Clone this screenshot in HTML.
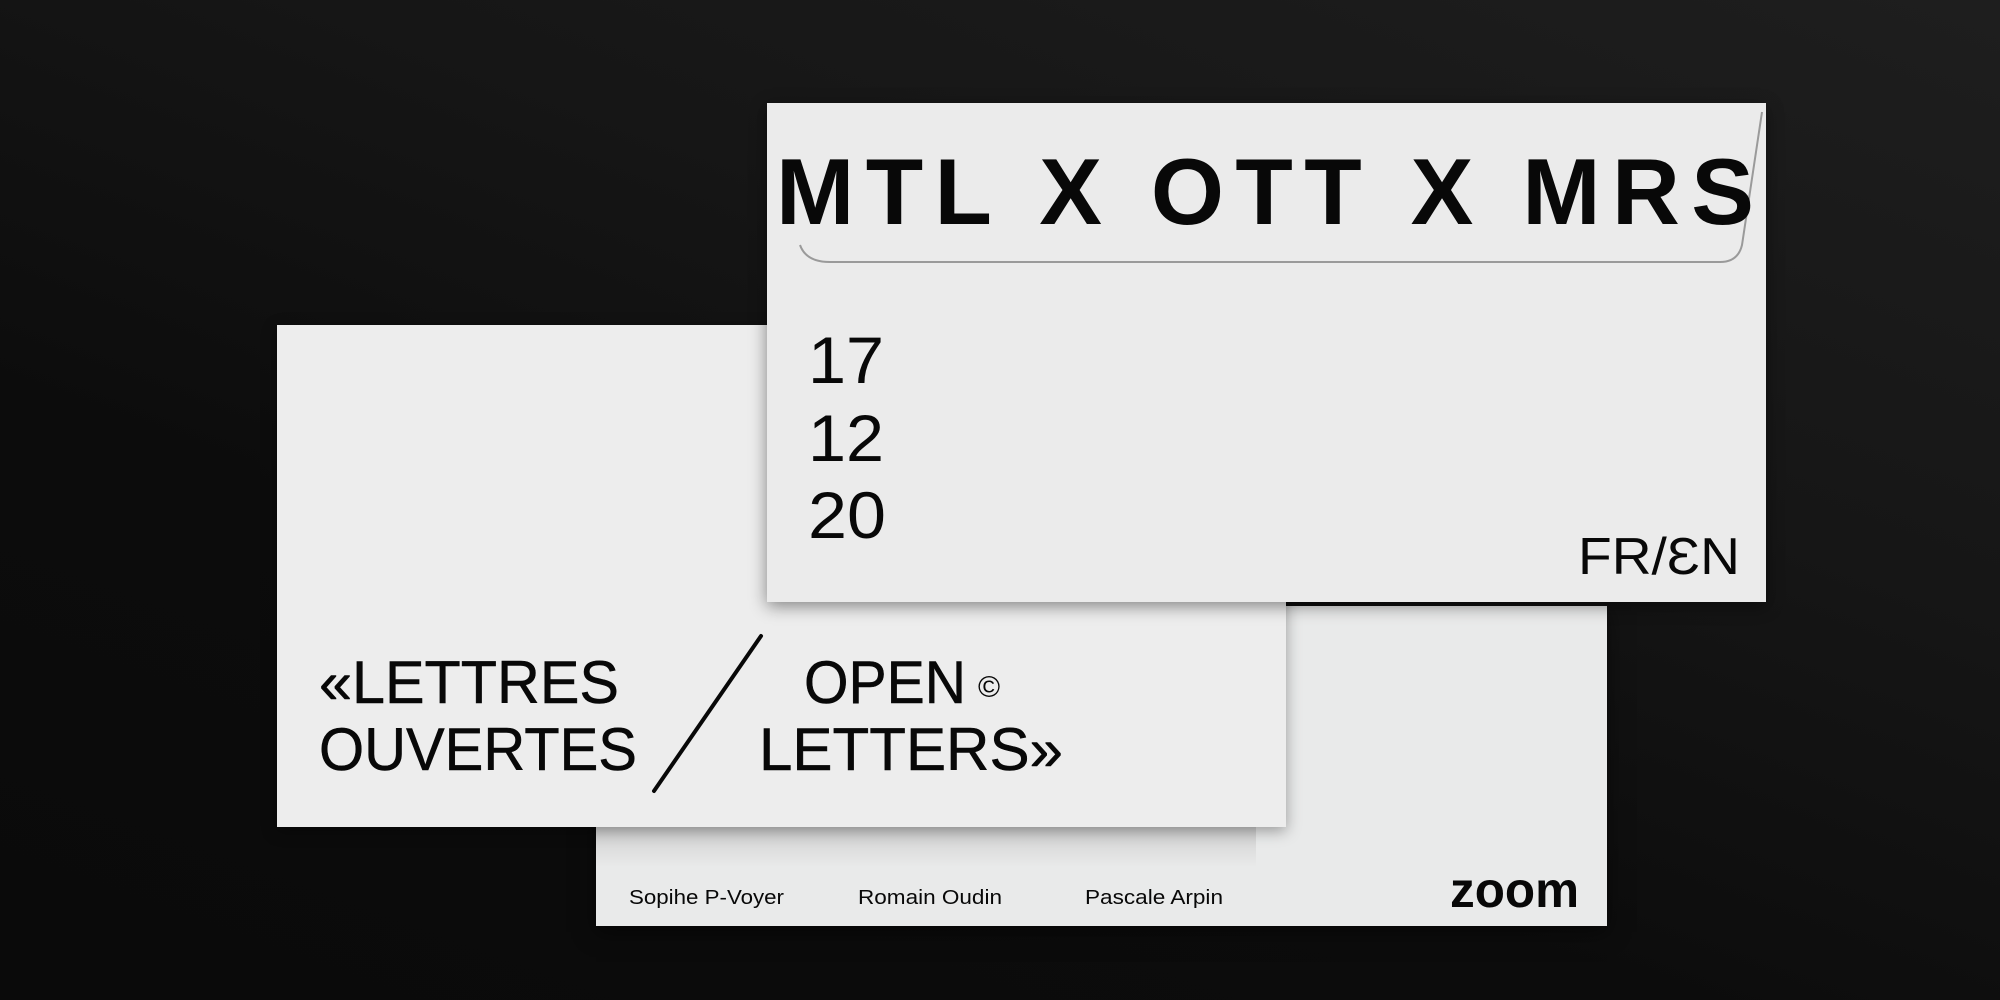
<!DOCTYPE html>
<html><head><meta charset="utf-8"><style>
html,body{margin:0;padding:0;width:2000px;height:1000px;overflow:hidden;background:#0e0e0e}
.bg{position:absolute;inset:0;background:linear-gradient(200deg,#1e1e1e 0%,#161616 35%,#0c0c0c 65%,#0a0a0a 100%)}
.p{position:absolute;background:#ececec}
svg{position:absolute;left:0;top:0}
</style></head><body>
<div class="bg"></div>
<div class="p" style="left:596px;top:606px;width:1011px;height:320px;background:#e9eaea;box-shadow:0 6px 20px rgba(0,0,0,.5)"></div>
<div class="p" style="left:596px;top:827px;width:660px;height:40px;background:linear-gradient(#cfcfcf,rgba(233,234,234,0))"></div>
<div class="p" style="left:277px;top:325px;width:1009px;height:502px;background:#ededed;box-shadow:0 4px 14px rgba(0,0,0,.35)"></div>
<div class="p" style="left:767px;top:103px;width:999px;height:499px;background:#ebebeb;box-shadow:0 4px 16px rgba(0,0,0,.45)"></div>
<svg width="2000" height="1000" viewBox="0 0 2000 1000">
  <path d="M800 245 Q806 262 830 262 L1720 262 Q1738 262 1742 245 L1762 112" fill="none" stroke="#9a9a9a" stroke-width="2"/>
  <g font-family="Liberation Sans, sans-serif" fill="#080808">
    <text x="776" y="224" font-size="94" font-weight="bold" textLength="978" lengthAdjust="spacing">MTL X OTT X MRS</text>
    <g font-size="66">
      <text x="808" y="383" textLength="76" lengthAdjust="spacingAndGlyphs">17</text>
      <text x="808" y="461" textLength="76" lengthAdjust="spacingAndGlyphs">12</text>
      <text x="808" y="538" textLength="78" lengthAdjust="spacingAndGlyphs">20</text>
    </g>
    <text x="1578" y="574" font-size="52" textLength="162" lengthAdjust="spacingAndGlyphs">FR/ƐN</text>
    <g font-size="60" stroke="#080808" stroke-width="0.5">
      <text x="319" y="703" textLength="300" lengthAdjust="spacingAndGlyphs">«LETTRES</text>
      <text x="319" y="770" textLength="318" lengthAdjust="spacingAndGlyphs">OUVERTES</text>
      <text x="804" y="703" textLength="162" lengthAdjust="spacingAndGlyphs">OPEN</text>
      <text x="759" y="770" textLength="304" lengthAdjust="spacingAndGlyphs">LETTERS»</text>
    </g>
    <text x="978" y="697" font-size="30">©</text>
    <g font-size="20">
      <text x="629" y="904" textLength="155" lengthAdjust="spacingAndGlyphs">Sopihe P-Voyer</text>
      <text x="858" y="904" textLength="144" lengthAdjust="spacingAndGlyphs">Romain Oudin</text>
      <text x="1085" y="904" textLength="138" lengthAdjust="spacingAndGlyphs">Pascale Arpin</text>
    </g>
    <text x="1450" y="907" font-size="50" font-weight="bold" textLength="129" lengthAdjust="spacingAndGlyphs">zoom</text>
  </g>
  <line x1="761" y1="636" x2="654" y2="791" stroke="#080808" stroke-width="4" stroke-linecap="round"/>
</svg>
</body></html>
